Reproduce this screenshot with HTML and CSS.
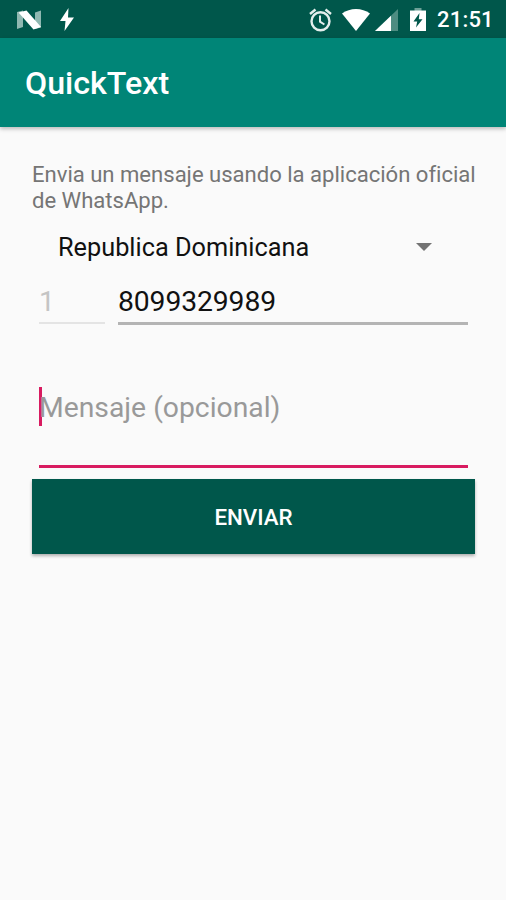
FILE: index.html
```html
<!DOCTYPE html>
<html lang="es">

<head>
  <meta charset="UTF-8" />
  <title>QuickText</title>
  <meta name="viewport" content="width=device-width, initial-scale=1.0" />
  <link rel="stylesheet" href="styles.css">
</head>

<body>

  <div class="status-bar">
    <svg class="icon-n" width="26" height="20" viewBox="0 0 26 20">
      <path d="M1 2L7 .5v16.500L1 19zM19 2.500L25 .5v17L19 19z" fill="#8fb8b1" />
      <path d="M2.500 2.500L10.500 .5 25 17l-7.500 2.500z" fill="#fff" />
    </svg>
    <svg class="icon-bolt" width="14" height="23" viewBox="0 0 14 23">
      <path d="M8.500 0L0 13h5.500L4.500 23 14 9.500H8z" fill="#fff" />
    </svg>

    <svg class="icon-alarm" width="24" height="24" viewBox="0 0 24 24" fill="none" stroke="#e4efed" stroke-width="2.400">
      <circle cx="12.500" cy="13.300" r="9" />
      <path d="M2 6L7.500 1.500M17.500 1.500L23 6" />
      <path d="M12 7.500v6.200l4.400 2.800" stroke-width="2" />
    </svg>
    <svg class="icon-wifi" width="28" height="22" viewBox="0 0 28 22">
      <path d="M0 4.500C8-1.500 20-1.500 28 4.500L14 22z" fill="#fff" />
    </svg>
    <svg class="icon-signal" width="23" height="22" viewBox="0 0 23 22">
      <path d="M23 0v22H0z" fill="#4d8c81" />
      <path d="M16 6.700V22H0z" fill="#fff" />
    </svg>
    <svg class="icon-battery" width="16" height="23" viewBox="0 0 16 23">
      <path d="M4.500 0h7v3h-7z" fill="#6da097" />
      <path d="M0 2.500h16V23H0z" fill="#fff" />
      <path d="M9.500 5L3.500 13.500H7.200L6 19.500l6.500-8.300H8.800z" fill="#00574b" />
    </svg>
    <span class="clock">21:51</span>
  </div>

  <header class="app-bar">
    <h1>QuickText</h1>
  </header>

  <main class="content">
    <p class="intro">Envia un mensaje usando la aplicación oficial de WhatsApp.</p>

    <div class="spinner">
      <span>Republica Dominicana</span>
      <svg width="16" height="8" viewBox="0 0 16 8">
        <path d="M0 0h16L8 8z" fill="#737373" />
      </svg>
    </div>

    <div class="phone">
      <div class="field code">1</div>
      <div class="field number">8099329989</div>
    </div>

    <div class="field message">
      <span class="caret"></span>
      <span class="hint">Mensaje (opcional)</span>
    </div>

    <button class="send">ENVIAR</button>
  </main>

</body>

</html>
```
FILE: styles.css
```css
* {
  box-sizing: border-box;
  margin: 0;
  padding: 0;
}

html,
body {
  height: 100%;
  background: #fafafa;
  font-family: Roboto, "Liberation Sans", sans-serif;
  overflow: hidden;
}

body {
  display: flex;
  flex-direction: column;
}

/* ─── STATUS BAR ─────────────────────────────────────────────────── */
.status-bar {
  display: flex;
  align-items: center;
  flex: none;
  height: 38px;
  padding: 1px 12px 0 16px;
  background: #00574b;
  color: #fff;
}

.status-bar svg {
  flex: none;
}

.icon-bolt {
  margin-left: 18px;
}

.icon-alarm {
  margin-left: auto;
}

.icon-wifi {
  margin-left: 10px;
}

.icon-signal {
  margin-left: 5px;
}

.icon-battery {
  margin-left: 12px;
}

.clock {
  width: 57px;
  margin-left: 11px;
  font-size: 22px;
  font-weight: 500;
  line-height: 38px;
  letter-spacing: 0.2px;
  white-space: nowrap;
}

/* ─── APP BAR ────────────────────────────────────────────────────── */
.app-bar {
  display: flex;
  align-items: center;
  flex: none;
  height: 89px;
  padding: 1px 25px 0;
  background: #008577;
  color: #fff;
  box-shadow: 0 2px 4px rgba(0, 0, 0, 0.25);
}

.app-bar h1 {
  font-size: 32.2px;
  font-weight: 500;
}

/* ─── FORM ───────────────────────────────────────────────────────── */
.content {
  display: flex;
  flex-direction: column;
  padding: 35px 31px 0 32px;
}

.intro {
  margin-right: -6px;
  color: #757575;
  font-size: 22.1px;
  line-height: 25.5px;
  letter-spacing: -0.02px;
}

.spinner {
  display: flex;
  align-items: center;
  justify-content: space-between;
  height: 38px;
  margin-top: 15px;
  padding: 0 43px 0 26px;
  color: #111;
  font-size: 25.3px;
}

.phone {
  display: flex;
  gap: 13px;
  margin: 13px 7px 0;
}

.field {
  font-size: 28.3px;
}

.code,
.number {
  padding-top: 6px;
  line-height: 34px;
}

.code {
  width: 66px;
  height: 45px;
  border-bottom: 2px solid #e4e4e4;
  color: #c4c4c4;
}

.number {
  flex: 1;
  height: 46px;
  border-bottom: 3px solid #b4b4b4;
  color: #111;
  letter-spacing: -0.1px;
}

.message {
  display: flex;
  align-items: flex-start;
  height: 81px;
  margin: 62px 7px 0;
  border-bottom: 3px solid #d81b60;
  color: #999;
}

.caret {
  width: 3px;
  height: 39px;
  margin-right: -3px;
  background: #d81b60;
}

.hint {
  line-height: 42px;
}

.send {
  height: 75px;
  margin-top: 11px;
  border: none;
  background: #00574b;
  box-shadow: 0 2px 3px rgba(0, 0, 0, 0.3);
  color: #fff;
  font-family: inherit;
  font-size: 22.3px;
  font-weight: 500;
}
```
